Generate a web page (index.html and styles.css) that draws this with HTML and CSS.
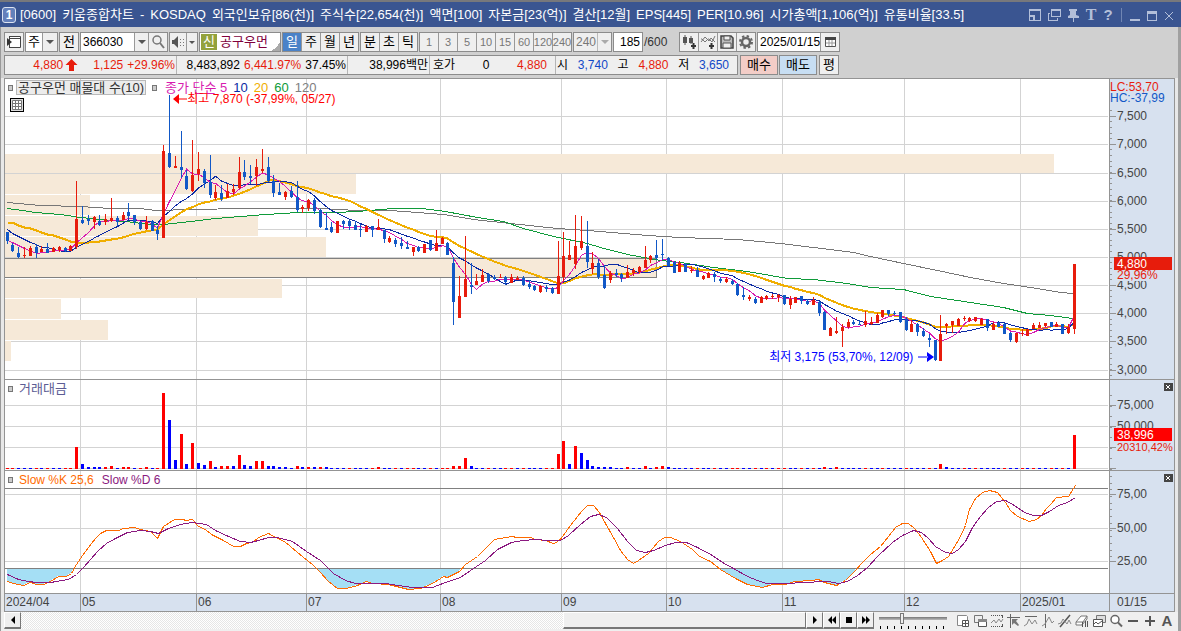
FILE: index.html
```html
<!DOCTYPE html>
<html lang="ko">
<head>
    <meta charset="UTF-8">
    <meta name="viewport" content="width=device-width, initial-scale=1.0">
    <title>[0600] 키움종합차트</title>
    <link rel="stylesheet" href="styles.css">
</head>
<body>
    <header class="titlebar">
        <span class="badge">1</span>
        <h1 class="title">
            <span>[0600]</span><span>키움종합차트</span><span>-</span><span>KOSDAQ</span><span>외국인보유[86(천)]</span><span>주식수[22,654(천)]</span><span>액면[100]</span><span>자본금[23(억)]</span><span>결산[12월]</span><span>EPS[445]</span><span>PER[10.96]</span><span>시가총액[1,106(억)]</span><span>유통비율[33.5]</span>
        </h1>
        <div class="window-buttons">
            <button aria-label="화면 배치"><svg width="14" height="14"><path d="M1 1h12v12H1zM2 3v4h5v5h5V3zM2 9v3h3V9z" fill="currentColor" fill-rule="evenodd"/></svg></button>
            <button aria-label="복사"><svg width="14" height="14"><path d="M4 1h10v8H4zM5 3v5h8V3zM1 5h2v1H2v6h8v-2h1v3H1z" fill="currentColor" fill-rule="evenodd"/></svg></button>
            <button aria-label="고정"><svg width="14" height="14"><path d="M3 1h8v2h-1v4l3 1v2H8v4H7v-4H2V8l2-1V3H3z" fill="currentColor"/></svg></button>
            <button class="serif" aria-label="글꼴">T</button>
            <button class="help" aria-label="도움말">?</button>
            <i class="split"></i>
            <button aria-label="최소화"><svg width="12" height="14"><path d="M1 11h10v2H1z" fill="currentColor"/></svg></button>
            <button aria-label="최대화"><svg width="12" height="14"><path d="M1 3h10v10H1zM2 6v6h8V6z" fill="currentColor" fill-rule="evenodd"/></svg></button>
            <button aria-label="닫기"><svg width="12" height="14"><path d="M2 4l8 8M10 4l-8 8" stroke="currentColor" fill="none"/></svg></button>
        </div>
    </header>

    <main class="window">
        <div class="toolbars">
            <div class="toolbar">
                <div class="group"><button class="btn" aria-label="목록"><svg width="16" height="14"><path d="M4 1.500h10.500v11H4" fill="#fff" stroke="#444"/><path d="M3.500 1v12M4 3.500h10" stroke="#444" fill="none"/><path d="M1 3l5 4-5 4z" fill="#333"/></svg></button></div>
                <div class="group"><button class="btn white">주</button><button class="arrow" aria-label="종목 유형"></button></div>
                <div class="group"><button class="btn">전</button></div>
                <div class="group">
                    <input class="field code" type="text" value="366030" aria-label="종목코드">
                    <button class="arrow" aria-label="최근 종목"></button>
                    <button class="btn" aria-label="검색"><svg width="14" height="14"><circle cx="6" cy="5" r="4" fill="none" stroke="#777" stroke-width="1.500"/><path d="M9 8l4 5" stroke="#777" stroke-width="2"/></svg></button>
                </div>
                <div class="group"><button class="btn speaker" aria-label="소리"><svg width="14" height="14"><path d="M1 5h2l4-4v12L3 9H1z" fill="#555"/><path d="M9 4h1v1H9zM12 4h1v1h-1zM9 7h1v1H9zM12 7h1v1h-1zM9 10h1v1H9zM12 10h1v1h-1z" fill="#777"/></svg></button><button class="arrow slim" aria-label="소리 설정"></button></div>
                <div class="group stock"><span class="new">신</span><span>공구우먼</span></div>
                <div class="group">
                    <button class="btn on">일</button><button class="btn">주</button><button class="btn">월</button><button class="btn">년</button>
                </div>
                <div class="group">
                    <button class="btn">분</button><button class="btn">초</button><button class="btn">틱</button>
                </div>
                <div class="group off">
                    <button class="btn">1</button><button class="btn">3</button><button class="btn">5</button><button class="btn">10</button><button class="btn">15</button><button class="btn">60</button><button class="btn">120</button><button class="btn">240</button>
                </div>
                <div class="group off interval"><span>240</span><button class="arrow" aria-label="분 간격"></button></div>
                <div class="group"><input class="field count" type="text" value="185" aria-label="표시 개수"></div>
                <span class="total">/600</span>
                <div class="group tools">
                    <button class="btn" aria-label="차트 추가"><svg width="16" height="14"><path d="M2 2h4v6H2zM8 3h4v5H8z" fill="#555"/><path d="M4 0v10M10 1v8" stroke="#555"/><path d="M12.500 8v6M10 11h5" stroke="#333" stroke-width="2"/></svg></button>
                    <button class="btn" aria-label="지표 추가"><svg width="16" height="14"><path d="M1 7l4-5 4 4 2-3 4 4M1 4h1l3 3 3-3h1l3 3 3-6" fill="none" stroke="#777"/><path d="M11.500 8v6M9 11h5" stroke="#333" stroke-width="2"/></svg></button>
                    <button class="btn" aria-label="저장"><svg width="14" height="14"><path d="M1 1h10l2 2v10H1z" fill="#bbb" stroke="#444" stroke-width="1.500"/><path d="M4 1h6v4H4zM3 8h8v5H3z" fill="#eee" stroke="#555"/></svg></button>
                    <button class="btn" aria-label="설정"><svg width="14" height="14"><circle cx="7" cy="7" r="4" fill="none" stroke="#666" stroke-width="2.500"/><circle cx="7" cy="7" r="6" fill="none" stroke="#666" stroke-width="2" stroke-dasharray="2.400 2.300"/></svg></button>
                </div>
                <div class="group">
                    <input class="field date" type="text" value="2025/01/15" aria-label="날짜">
                    <button class="btn" aria-label="달력"><svg width="13" height="12"><path d="M1.500 2.500h10v8h-10z" fill="#fff" stroke="#555"/><path d="M1 1h11v3H1z" fill="#444"/><path d="M5 4v6M8 4v6M2 7h9" stroke="#999"/></svg></button>
                </div>
            </div>

            <div class="toolbar">
                <div class="quotes">
                    <div class="q-price up"><span class="last">4,880</span><svg width="13" height="13"><path d="M6.500 0l6 6H9v6H4V6H.5z" fill="currentColor"/></svg><span class="diff">1,125</span><span>+29.96%</span></div>
                    <div class="q-volume"><span>8,483,892</span><span class="up">6,441.97%</span><span>37.45%</span></div>
                    <div class="q-amount">38,996백만</div>
                    <div class="q-ask"><span>호가</span><span>0</span><span class="up">4,880</span></div>
                    <div class="q-ohlc"><span>시</span><span class="down">3,740</span><span>고</span><span class="up">4,880</span><span>저</span><span class="down">3,650</span></div>
                </div>
                <button class="order buy">매수</button>
                <button class="order sell">매도</button>
                <button class="order avg">평</button>
            </div>
        </div>

        <section class="charts">
            <div class="pane price">
                <svg id="price-plot" class="plot" viewBox="5 79 1104 300" preserveAspectRatio="none"></svg>
                <svg id="price-axis" class="axis" viewBox="1110 79 64 300"></svg>
                <div class="legend">
                    <i class="handle"></i><span class="tag">공구우먼 매물대 수(10)</span>
                    <i class="handle"></i><span class="ma"><b class="m5">종가 단순 5</b><b class="m10">10</b><b class="m20">20</b><b class="m60">60</b><b class="m120">120</b></span>
                </div>
                <button class="sheet" aria-label="표 보기"><svg width="10" height="10"><path d="M.5.5h9v9h-9zM.5 3.500h9M.5 6.500h9M3.500.5v9M6.500.5v9" fill="#fff" stroke="#777"/></svg></button>
                <span class="note high"><svg width="14" height="10"><path d="M0 5l6-5v10zM5 4.500h9v1H5z" fill="currentColor"/></svg>최고 7,870 (-37,99%, 05/27)</span>
                <span class="note low">최저 3,175 (53,70%, 12/09)<svg width="16" height="10"><path d="M16 5l-7-5v10zM0 4.500h10v1H0z" fill="currentColor"/></svg></span>
            </div>
            <div class="pane volume">
                <svg id="volume-plot" class="plot" viewBox="5 380 1104 90" preserveAspectRatio="none"></svg>
                <svg id="volume-axis" class="axis" viewBox="1110 380 64 90"></svg>
                <div class="legend"><i class="handle"></i><span class="amount">거래대금</span></div>
                <button class="close" aria-label="거래대금 닫기"><svg width="9" height="8"><path d="M2 2l4 4M6 2l-4 4" stroke="#fff"/></svg></button>
            </div>
            <div class="pane slow">
                <svg id="slow-plot" class="plot" viewBox="5 471 1104 122" preserveAspectRatio="none"></svg>
                <svg id="slow-axis" class="axis" viewBox="1110 471 64 122"></svg>
                <div class="legend"><i class="handle"></i><span class="k">Slow %K 25,6</span><span class="d">Slow %D 6</span></div>
                <button class="close" aria-label="스토캐스틱 닫기"><svg width="9" height="8"><path d="M2 2l4 4M6 2l-4 4" stroke="#fff"/></svg></button>
            </div>
            <div class="dates">
                <div class="months"><span>2024/04</span><span>05</span><span>06</span><span>07</span><span>08</span><span>09</span><span>10</span><span>11</span><span>12</span><span>2025/01</span></div>
                <span class="today">01/15</span>
            </div>
        </section>

        <footer class="bottom">
            <button class="key" aria-label="왼쪽"><svg width="6" height="8"><path d="M5 0v8L1 4z"/></svg></button>
            <div class="track"><div class="thumb"></div></div>
            <button class="key" aria-label="오른쪽"><svg width="6" height="8"><path d="M1 0v8l4-4z"/></svg></button>
            <button class="key" aria-label="뒤로"><svg width="10" height="8"><path d="M5 0v8L1 4zM9 0v8L5 4z"/></svg></button>
            <button class="key" aria-label="정지"><svg width="8" height="8"><path d="M1 1h6v6H1z"/></svg></button>
            <button class="key" aria-label="앞으로"><svg width="10" height="8"><path d="M1 0v8l4-4zM5 0v8l4-4z"/></svg></button>
            <div class="speed">
                <input type="range" min="0" max="9" value="3" aria-label="재생 속도">
                <div class="marks"></div>
            </div>
            <div class="draw-tools">
                <button aria-label="화면 추가"><svg><path d="M1.500 1.500h9l1 1v9h-10z" fill="#fff" stroke="#888"/><path d="M6.500 6.500h6v6h-6zM9.500 6v7M6 9.500h7" fill="#fff" stroke="#555"/></svg></button>
                <button aria-label="겹쳐 보기"><svg><path d="M1.500 1.500h8v7h-8z" fill="#eee" stroke="#777"/><path d="M5.500 5.500h8v7h-8z" fill="#fff" stroke="#555"/><path d="M5 5h9v3H5z" fill="#888"/></svg></button>
                <button aria-label="구간"><svg><path d="M1 1.500h12M1 12.500h12" stroke="#555" stroke-dasharray="1 1"/><path d="M1 9l3-3 2 3 3-4 2 3 2-3" fill="none" stroke="#888"/><path d="M12.500 1v3M12.500 10v3" stroke="#555"/></svg></button>
                <button aria-label="십자선"><svg><path d="M0 3.500h13M3.500 0v14" stroke="#666"/><path d="M5 5h6L9 7l3 4-1 1-4-3-2 2z" fill="#777"/></svg></button>
                <button aria-label="추세선"><svg><path d="M1 2.500h12" stroke="#666"/><path d="M0 12l3-2 2-5 3 5 3-4 2 4" fill="none" stroke="#888"/></svg></button>
                <button aria-label="수직선"><svg><path d="M4.500 0v14" stroke="#666"/><path d="M1 12l3-2 4-7 3 6 2-2" fill="none" stroke="#888"/></svg></button>
                <button aria-label="사선"><svg><path d="M2 13L12 1" stroke="#555" stroke-width="1.500"/><path d="M0 10l3-1 2-4 4 5 2-4 2 4" fill="none" stroke="#888"/></svg></button>
                <button aria-label="모두 지우기"><svg><path d="M1 8l5-6h6l-4 6zM1 8v3h6l1-3M7 11l5-6V2" fill="#fff" stroke="#777"/><path d="M7.500 8v5M10.500 7v6M12.500 7v6" stroke="#555"/></svg></button>
                <button aria-label="차트 복사"><svg><path d="M4.500 1.500h9v7h-9z" fill="#ddd" stroke="#777"/><path d="M1.500 5.500h9v7h-9z" fill="#fff" stroke="#555"/><path d="M2 10l2-2 2 2 4-3" fill="none" stroke="#555"/></svg></button>
                <button aria-label="돋보기"><svg><circle cx="6" cy="5.500" r="4" fill="#fff" stroke="#666" stroke-width="1.500"/><path d="M9 8.500l4 4" stroke="#666" stroke-width="2"/></svg></button>
                <button aria-label="축소"><svg><path d="M2 7h10" stroke="#555" stroke-width="2"/></svg></button>
                <button aria-label="확대"><svg><path d="M2 7h10M7 2v10" stroke="#555" stroke-width="2"/></svg></button>
                <button class="letter" aria-label="자동">A</button>
            </div>
        </footer>
    </main>

    <script src="chart.js"></script>
</body>
</html>
```
FILE: styles.css
```css
* {
    box-sizing: border-box;
}
body {
    margin: 0;
    background-color: #d0d0d0;
    font-family: "Liberation Sans", "Noto Sans CJK KR", sans-serif;
    font-size: 12px;
    line-height: 16px;
    color: #000;
}
button, input {
    font: inherit;
    color: inherit;
    margin: 0;
    padding: 0;
    border: none;
    background: none;
}
button {
    display: flex;
    align-items: center;
    justify-content: center;
    flex: none;
}
svg {
    display: block;
    flex: none;
}
.up {
    color: #e71c0c;
}
.down {
    color: #1148c7;
}

/* title bar */
.titlebar {
    display: flex;
    align-items: center;
    height: 27px;
    padding: 0 6px 0 2px;
    background-color: #3a5591;
    border-top: 2px solid #77787c;
    color: #fff;
}
.badge {
    width: 14px;
    height: 16px;
    border: 1px solid #dde4f2;
    border-radius: 3px;
    background-color: #6480bb;
    font-weight: bold;
    line-height: 14px;
    text-align: center;
}
.title {
    display: flex;
    flex: 1;
    gap: 6px;
    margin: 0 0 0 4px;
    font-size: 13px;
    font-weight: normal;
    white-space: nowrap;
}
.window-buttons {
    display: flex;
    align-items: center;
    gap: 5px;
    color: #b3bfd9;
}
.window-buttons .serif {
    width: 12px;
    font: bold 16px "Liberation Serif", serif;
}
.window-buttons .help {
    width: 12px;
    font-size: 15px;
    font-weight: bold;
}
.split {
    width: 1px;
    height: 14px;
    margin: 0 2px;
    background-color: #7186b3;
}

/* toolbars */
.window {
    border-left: 1px solid #999;
    border-right: 3px solid #a0a0a0;
    background-color: #e8e8e8;
}
.toolbars {
    display: flex;
    flex-direction: column;
    gap: 3px;
    height: 51px;
    padding: 5px 3px 0;
    background-color: #d0d0d0;
}
.toolbar {
    display: flex;
    height: 20px;
    gap: 1px;
}
.group {
    display: flex;
    border: 1px solid #8c8c8c;
    background-color: #efefef;
}
.btn {
    width: 19px;
    height: 18px;
    background-color: #efefef;
    border-right: 1px solid #999;
    font-size: 13px;
}
.btn:last-child {
    width: 18px;
    border-right: none;
}
.btn.white {
    width: 17px;
    background-color: #fff;
}
.btn.on {
    background-color: #4a82c8;
    color: #fff;
}
.btn.speaker {
    width: 17px;
}
.arrow {
    width: 14px;
    height: 18px;
    border-right: 1px solid #999;
}
.arrow:last-child {
    border-right: none;
}
.arrow.slim {
    width: 10px;
}
.arrow::after {
    content: "";
    border: 4px solid transparent;
    border-top: 4px solid #555;
    border-bottom: none;
}
.arrow.slim::after {
    border-width: 3px 3px 0;
}
.off {
    color: #777;
}
.off .btn {
    font-size: 11px;
}
.off .arrow {
    border-left: 1px solid #bbb;
}
.off .arrow::after {
    border-top-color: #aaa;
}
.field {
    height: 18px;
    background-color: #fff;
}
.code {
    width: 54px;
    padding-left: 2px;
    border-right: 1px solid #999;
}
.stock {
    width: 82px;
    gap: 3px;
    align-items: center;
    background: linear-gradient(135deg, transparent 50%, #aaa 50%) right bottom / 8px 8px no-repeat #fff;
    font-size: 13px;
    color: #80003c;
}
.new {
    width: 16px;
    height: 16px;
    margin-left: 1px;
    background-color: #93a23c;
    color: #fff;
    text-align: center;
}
.interval {
    width: 39px;
    justify-content: space-between;
    align-items: center;
    padding-left: 2px;
}
.count {
    width: 28px;
    text-align: right;
    padding-right: 2px;
}
.total {
    width: 34px;
    line-height: 20px;
    color: #333;
}
.date {
    width: 63px;
    padding-left: 2px;
    border-right: 1px solid #999;
}

.quotes {
    display: flex;
    width: 734px;
    margin-right: 1px;
    border: 1px solid #8c8c8c;
    background-color: #efefef;
    line-height: 18px;
    white-space: nowrap;
}
.quotes > div {
    display: flex;
    align-items: center;
    justify-content: flex-end;
    padding-right: 1px;
    border-right: 1px solid #b5b5b5;
}
.quotes > div:last-child {
    border-right: none;
}
.q-price {
    width: 172px;
}
.q-price .last {
    margin-right: 2px;
}
.q-price .diff {
    margin: 0 4px 0 15px;
}
.q-volume {
    width: 171px;
    gap: 4px;
}
.q-amount {
    width: 82px;
}
.quotes .q-ask {
    width: 126px;
    justify-content: space-between;
    padding: 0 8px 0 3px;
}
.quotes .q-ohlc {
    flex: 1;
    justify-content: space-between;
    padding: 0 8px 0 1px;
}
.order {
    width: 38px;
    border: 1px solid #8c8c8c;
    font-size: 13px;
}
.buy {
    background-color: #f3cdc7;
}
.sell {
    background-color: #c7def3;
}
.avg {
    width: 20px;
    margin-left: 1px;
    background-color: #efefef;
}

/* charts */
.charts {
    margin: 0 3px;
    border: 1px solid #949494;
    background-color: #fff;
}
.pane {
    position: relative;
    display: flex;
    border-bottom: 1px solid #949494;
}
.plot {
    flex: 1;
    width: 0;
}
.axis {
    box-sizing: content-box;
    width: 64px;
    border-left: 1px solid #949494;
    background-color: #d7e1ef;
    font-size: 12px;
    fill: #444;
}
.axis .small {
    font-size: 11px;
}
.price svg.plot, .price svg.axis {
    height: 300px;
}
.volume svg.plot, .volume svg.axis {
    height: 90px;
}
.slow svg.plot, .slow svg.axis {
    height: 122px;
}
.legend {
    position: absolute;
    top: 0;
    left: 3px;
    display: flex;
    align-items: center;
    height: 17px;
}
.handle {
    width: 5px;
    height: 6px;
    margin-right: 3px;
    border: 1px solid #777;
    background-color: #ccc;
}
.tag {
    padding: 0 1px;
    margin-right: 6px;
    border: 1px solid #b9b9b9;
    background-color: #ececec;
    font-size: 13px;
    line-height: 13px;
    color: #333;
}
.ma {
    display: flex;
    gap: 6px;
    margin-left: 5px;
    font-size: 13px;
}
.ma b {
    font-weight: normal;
}
.m5 {
    color: #d81bb0;
}
.m10 {
    color: #0b2aa5;
}
.m20 {
    color: #f0ae00;
}
.m60 {
    color: #0f9b3a;
}
.m120 {
    color: #808080;
}
.amount {
    margin-left: 3px;
    font-size: 13px;
    color: #5c5c94;
}
.k {
    margin: 0 8px 0 3px;
    color: #ff6a00;
}
.d {
    color: #8b1a80;
}
.sheet {
    position: absolute;
    top: 19px;
    left: 5px;
    width: 14px;
    height: 14px;
    border: 1px solid #000;
    background-color: #ddd;
}
.note {
    position: absolute;
    display: flex;
    align-items: center;
    white-space: nowrap;
}
.high {
    top: 12px;
    left: 14.4%;
    color: #f00;
}
.low {
    top: 270px;
    right: 20.5%;
    gap: 5px;
    color: #00f;
}
.close {
    position: absolute;
    top: 3px;
    right: 1px;
    width: 9px;
    height: 8px;
    background-color: #444;
}
.dates {
    display: flex;
    height: 17px;
    background-color: #d7e1ef;
    color: #444;
}
.months {
    flex: 1;
    display: grid;
    grid-template-columns: 76fr 116fr 110fr 134fr 121fr 105fr 116fr 122fr 116fr 88fr;
}
.months span {
    min-width: 0;
    padding-left: 1px;
    border-right: 1px solid #949494;
}
.months span:last-child {
    border-right: none;
}
.today {
    width: 65px;
    padding-left: 7px;
    border-left: 1px solid #949494;
}

/* scroll and replay row */
.bottom {
    display: flex;
    height: 19px;
    padding: 0 3px 2px;
    background-color: #efefef;
}
.key {
    width: 17px;
    border: 1px solid #fff;
    border-right: 1px solid #777;
    border-bottom: 2px solid #777;
    background-color: #efefef;
}
.track {
    flex: 1;
    display: flex;
    justify-content: flex-end;
    background: repeating-conic-gradient(#e6e6e6 0 25%, #fff 0 50%) 0 0 / 2px 2px;
}
.thumb {
    width: 31%;
    border: 1px solid #fff;
    border-right: 1px solid #777;
    border-bottom: 2px solid #777;
    background-color: #efefef;
}
.speed {
    width: 76px;
    padding: 1px 3px 0 5px;
}
.speed input {
    display: block;
    width: 68px;
    height: 11px;
    appearance: none;
    background: linear-gradient(#777, #bbb) 0 4px / 100% 3px no-repeat;
}
.speed input::-webkit-slider-thumb {
    appearance: none;
    width: 4px;
    height: 11px;
    border: 1px solid #777;
    background-color: #eee;
}
.marks {
    height: 3px;
    margin: 2px 0 0 1px;
    background: repeating-linear-gradient(90deg, #000 0 1px, transparent 1px 7px);
}
.draw-tools {
    display: flex;
    gap: 3px;
    margin: 0 1px 0 6px;
}
.draw-tools button {
    width: 14px;
}
.draw-tools svg {
    width: 14px;
    height: 14px;
    fill: none;
}
.draw-tools .letter {
    font-size: 15px;
    font-weight: bold;
    color: #555;
}
```
FILE: chart.js
```js
const UP = '#e71c0c';
const DOWN = '#1158c7';
const GRID = '#d3d3d3';
const LINE = '#949494';

// high, body top, body bottom, low; negative high = falling candle
const candles = [
    [-232,232,241,244],[-243,245,251,252],[-247,253,257,258],[247,255,256,258],[246,248,256,256],[-244,247,253,258],[246,249,252,252],[-243,249,253,253],[247,248,252,252],[246,247,250,252],
    [-247,248,251,252],[245,246,251,251],[181,219,247,249],[-206,220,223,224],[-215,219,221,225],[216,217,222,229],[-215,221,225,226],[214,219,222,225],[198,218,221,222],[-216,218,222,226],
    [212,215,220,220],[-203,212,216,219],[-215,215,222,225],[-221,222,229,230],[216,222,229,230],[-220,221,231,231],[-226,230,234,240],[145,151,238,238],[-95,153,167,168],[156,166,168,168],
    [-131,167,170,178],[-170,176,189,190],[140,175,191,192],[152,169,174,181],[-169,171,183,188],[-155,182,195,198],[185,192,198,200],[-185,193,199,201],[184,191,198,198],[184,189,192,195],
    [157,172,188,189],[-160,172,177,180],[-165,176,178,184],[159,167,176,186],[149,169,171,173],[-157,167,181,182],[-175,181,193,197],[-183,192,195,195],[191,192,197,200],[-186,191,197,198],
    [-181,197,210,212],[205,207,209,213],[199,200,208,211],[-198,200,211,214],[-209,210,227,228],[-212,228,230,230],[-222,227,232,233],[221,221,233,233],[-220,221,224,229],[-220,221,226,230],
    [-221,225,230,230],[-224,229,230,237],[225,226,232,232],[-226,226,230,237],[219,227,230,230],[-230,230,239,243],[236,238,242,243],[-238,240,244,247],[-237,243,246,249],[-241,247,249,249],
    [247,247,252,256],[-246,247,251,252],[244,244,253,253],[-240,240,250,251],[230,243,251,251],[237,238,244,244],[-242,243,255,255],[-257,263,302,325],[276,296,318,318],[236,279,297,297],
    [-263,285,287,294],[274,281,285,285],[269,275,282,282],[-273,274,281,283],[-275,277,279,280],[274,277,278,278],[-276,277,282,285],[274,277,283,283],[276,278,280,280],[-276,278,285,286],
    [-280,284,287,289],[-285,286,290,291],[285,286,292,293],[-285,287,289,292],[-287,288,293,294],[241,276,294,294],[232,256,277,282],[241,255,260,260],[215,246,264,269],[216,241,248,250],
    [-221,246,262,268],[252,263,269,274],[-259,263,277,279],[-265,275,288,289],[271,273,280,283],[-269,273,275,277],[-273,274,278,282],[265,272,278,278],[268,270,273,276],[266,267,272,273],
    [246,260,268,268],[255,256,260,263],[-240,255,258,260],[-239,254,255,260],[-257,258,266,266],[-261,262,273,273],[261,263,272,272],[-263,264,272,272],[266,270,271,273],[-267,270,277,277],
    [275,276,279,280],[272,273,278,278],[-272,274,277,282],[-277,279,281,283],[277,279,282,283],[-279,281,284,285],[-283,284,295,296],[-287,295,297,300],[295,297,299,301],[-297,299,303,304],
    [296,297,303,303],[295,296,299,300],[294,296,297,299],[294,295,297,302],[-295,295,304,305],[296,299,305,309],[297,297,303,303],[-296,296,301,304],[-299,301,304,305],[297,300,305,305],
    [-301,302,313,316],[-311,312,330,330],[327,328,336,336],[317,331,333,334],[324,327,331,347],[319,322,327,328],[-320,322,324,325],[-320,324,325,325],[311,321,325,327],[317,322,324,325],
    [313,315,323,323],[310,310,317,318],[-310,310,314,316],[-311,313,314,315],[-312,312,322,323],[-317,319,330,331],[320,324,332,332],[-323,324,332,336],[-328,331,336,337],[-334,338,340,347],
    [-340,340,360,361],[315,334,361,361],[323,324,326,334],[321,321,325,333],[318,319,326,326],[316,318,319,321],[317,318,321,322],[317,317,321,322],[318,319,325,325],[-319,319,328,331],
    [322,324,330,330],[-322,323,327,327],[-323,324,334,334],[-332,333,340,342],[333,333,342,343],[329,333,334,336],[329,329,336,336],[323,325,329,329],[322,325,328,328],[323,323,326,327],
    [-322,322,327,327],[322,324,327,327],[-324,324,334,334],[324,327,333,334],[264,264,329,334]
];

const volumeColors =
    'rrbbbrbrbbrrrbbbbrrbrrbrrbrrbbrbrbbrbrrbrbbrrbbbbbrbrbrbbbbrbbbrrbbrbrrbbrbrrrrrbbbrbbrrbrbbbrrrrbrb' +
    'bbbbbbbrbbrbrrbbbbbrbbrbbrrbbrbrbrrbbrbrbrbrbbbbrbbrbbbrbbbrbrbbbrbrbbbbrbbrbrbbrbrbr';
// bar tops that stand above the base row
const volumeTops = {
    12: 447, 13: 464, 14: 467, 15: 467, 16: 467, 17: 467, 18: 466, 20: 467, 21: 467, 24: 467,
    27: 393, 28: 420, 29: 460, 30: 434, 31: 464, 32: 443, 33: 463, 34: 465, 35: 461, 36: 467,
    37: 466, 38: 466, 39: 466, 40: 455, 41: 465, 42: 466, 43: 461, 44: 461, 45: 466, 46: 466,
    47: 467, 48: 467, 50: 466, 51: 467, 52: 467, 53: 467, 54: 467, 55: 467, 64: 467, 77: 466,
    78: 466, 79: 458, 80: 466, 95: 454, 96: 441, 97: 464, 98: 446, 99: 453, 100: 460, 101: 466,
    102: 467, 103: 467, 104: 467, 107: 467, 110: 466, 112: 467, 113: 466, 114: 467, 141: 467,
    143: 467, 161: 464, 162: 467, 184: 435
};

const profile = [[154, 19, 1054], [174, 20, 356], [195, 20, 90], [216, 20, 258], [237, 20, 326], [258, 20, 656], [279, 19, 282], [299, 20, 61], [320, 20, 108], [341, 20, 11]];

const ma5Head = [240, 242, 245, 248];
const ma10Head = [229, 233, 236, 239, 242, 244, 247, 247, 249];
const ma20Head = [222, 222, 225, 227, 228, 230, 232, 234, 235, 237, 239, 241, 242, 242, 242, 241, 241, 240, 239];
const ma60 = '7,208 22,210 35,212 60,214 80,217 100,219 125,221 150,224 163,224 190,221 215,218 240,216 265,214 298,212 335,212 357,211 392,208 422,208 445,211 477,217 503,221 523,228 553,236 587,243 600,247 627,254 660,260 680,262 713,267 747,271 787,278 813,279 847,283 870,287 903,289 930,296 970,302 1003,307 1027,313 1050,315 1072,318';
const ma120 = '7,202 40,205 80,206 110,208 140,208 155,210 190,209 245,208 320,208 357,210 390,210 417,212 443,214 473,219 510,223 557,228 587,230 647,235 680,237 737,239 780,243 813,247 853,252 870,256 903,263 937,270 970,277 1003,283 1037,288 1060,292 1073,293';

const slowK = '7,581 13,583 23,585 30,582 36,584 43,584 50,581 58,576 66,576 71,573 76,564 82,555 88,547 95,538 100,533 106,530 118,530 123,528 134,527 140,529 150,531 157,538 163,526 174,519 182,519 186,520 192,519 198,526 205,529 211,534 221,539 228,543 233,546 240,546 246,543 252,542 258,537 268,533 275,537 284,541 290,546 303,557 312,564 320,572 328,581 337,588 346,588 357,585 366,581 372,583 388,584 400,587 408,589 420,588 430,584 437,580 443,576 447,577 459,571 465,564 477,556 486,547 494,539 511,536 517,537 530,537 535,539 545,540 553,543 558,541 562,536 570,525 581,511 587,505 593,505 599,512 605,523 613,537 620,550 627,559 633,563 638,560 648,553 658,541 664,537 670,537 680,541 692,549 699,556 710,561 720,569 735,578 747,584 762,587 772,584 785,584 794,581 812,580 818,579 824,582 836,585 845,580 855,570 861,563 870,554 880,546 888,536 895,527 902,523 908,523 914,528 921,537 930,551 936,563 942,560 948,556 953,548 959,538 965,525 969,509 975,498 982,492 989,490 997,492 1005,502 1010,510 1017,516 1029,521 1036,519 1041,515 1046,508 1051,503 1056,497 1068,496 1073,488 1075,485';
const slowD = '7,574 18,579 28,581 36,582 50,582 68,579 76,574 83,567 90,559 98,550 106,543 115,538 127,532 140,530 150,531 158,533 168,528 180,524 192,522 206,524 215,530 228,536 240,541 250,542 258,540 268,537 277,537 292,541 306,551 320,560 333,573 345,580 355,583 385,583 398,585 412,587 432,587 445,582 460,577 473,568 485,560 497,549 511,542 523,540 535,539 548,540 560,540 568,535 580,524 590,516 598,514 606,517 617,528 627,541 636,550 645,552 653,550 665,545 675,542 686,542 697,547 712,555 722,562 733,568 747,576 757,580 766,583 790,583 800,582 828,581 838,583 847,581 857,575 867,567 878,555 892,542 902,535 913,530 921,532 928,538 935,546 945,552 952,553 958,549 965,541 972,527 980,516 988,507 996,501 1005,500 1014,505 1024,512 1033,515 1041,515 1049,511 1058,505 1067,502 1075,497';

const months = [80, 196, 306, 440, 561, 666, 782, 904, 1020];

const x = i => Math.floor(7 + 5.8 * i);
const rect = (rx, ry, w, h, fill) => `<rect x="${rx}" y="${ry}" width="${w}" height="${h}" fill="${fill}"/>`;
const text = (tx, ty, s, fill = '#444', cls = 'value') => `<text x="${tx}" y="${ty}" fill="${fill}" class="${cls}">${s}</text>`;
const curve = (points, color, width = 1) =>
    `<polyline points="${points}" transform="translate(0.5 0.5)" fill="none" stroke="${color}" stroke-width="${width}"/>`;

function grid(rows, top, height) {
    return rows.map(y => rect(5, y, 1103, 1, GRID)).join('') +
        months.map(m => rect(m, top, 1, height, GRID)).join('');
}

function average(n, head) {
    const close = candles.map(c => c[0] < 0 ? c[2] : c[1]);
    return close.map((_, i) => {
        const y = i < n - 1 ? head[i] : close.slice(i - n + 1, i + 1).reduce((a, b) => a + b) / n;
        return `${x(i)},${y.toFixed(1)}`;
    }).join(' ');
}

function ticks(from, to, step) {
    let out = '';
    for (let y = from; y < to; y += step) {
        out += rect(1110, Math.round(y), 2, 1, LINE);
    }
    return out;
}

function fill(id, content) {
    document.getElementById(id).innerHTML = `<g shape-rendering="crispEdges">${content}</g>`;
}

function drawPrice() {
    const rows = [116, 144, 173, 201, 229, 257, 285, 313, 341, 370];
    let out = grid(rows, 79, 300);
    profile.forEach(p => out += rect(5, p[0], p[2] - 5, p[1], '#f6e9d8'));
    out += '<path d="M5 258.5h651.5v19H5" fill="none" stroke="#808080"/>';
    out += curve(ma120, '#777') + curve(ma60, '#0f9b3a');
    out += curve(average(20, ma20Head), '#f0ae00', 2);
    out += curve(average(10, ma10Head), '#0b2aa5');
    out += curve(average(5, ma5Head), '#d81bb0');
    candles.forEach(([high, top, bottom, low], i) => {
        const color = high < 0 ? DOWN : UP;
        const h = Math.abs(high);
        out += rect(x(i), h, 1, Math.max(low - h, 1), color);
        out += rect(x(i) - 1, top, 3, Math.max(bottom - top, 1), color);
    });
    fill('price-plot', out);

    out = ticks(110, 378, 5.64);
    rows.forEach((y, i) => {
        const value = (7500 - 500 * i).toLocaleString('en-US');
        out += rect(1110, y, 6, 1, LINE) + text(1117, y + 4, value);
    });
    out += rect(1114, 257, 58, 13, UP) + text(1117, 268, '4,880', '#fff');
    out += rect(1117, 270, 40, 11, '#d7e1ef') + text(1117, 279, '29,96%', UP);
    out += text(1110, 91, 'LC:53,70', UP) + text(1110, 102, 'HC:-37,99', DOWN);
    fill('price-axis', out);
}

function drawVolume() {
    let out = grid([405, 426, 447, 468], 380, 90);
    candles.forEach((_, i) => {
        const top = volumeTops[i] || 468;
        out += rect(x(i) - 1, top, 3, 469 - top, volumeColors[i] === 'r' ? '#f00' : '#00f');
    });
    fill('volume-plot', out);

    out = ticks(395, 469, 10.5);
    [405, 426, 447, 468].forEach(y => out += rect(1110, y, 6, 1, LINE));
    out += text(1117, 409, '75,000') + text(1117, 430, '50,000');
    out += rect(1114, 428, 58, 13, '#f00') + text(1117, 439, '38,996', '#fff');
    out += text(1117, 451, '20310,42%', UP, 'small');
    fill('volume-axis', out);
}

function drawSlow() {
    let out = '<clipPath id="oversold"><rect x="5" y="568" width="1104" height="25"/></clipPath>';
    out += grid([494, 528, 561], 471, 122);
    out += `<polygon points="7,568 ${slowK} 1075,568" fill="#a5dff5" clip-path="url(#oversold)"/>`;
    out += rect(5, 488, 1103, 1, '#808080') + rect(5, 568, 1103, 1, '#808080');
    out += curve(slowK, '#ff6a00') + curve(slowD, '#8b1a80');
    fill('slow-plot', out);

    out = ticks(476, 560, 6.7);
    [494, 528, 561].forEach((y, i) => {
        out += rect(1110, y, 6, 1, LINE) + text(1117, y + 4, `${75 - 25 * i},00`);
    });
    fill('slow-axis', out);
}

drawPrice();
drawVolume();
drawSlow();
```
